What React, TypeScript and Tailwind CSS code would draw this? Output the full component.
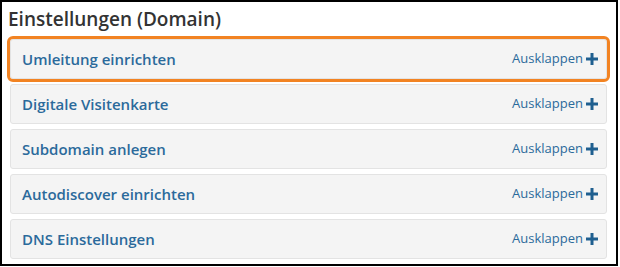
import React from "react";

const items = [
  "Umleitung einrichten",
  "Digitale Visitenkarte",
  "Subdomain anlegen",
  "Autodiscover einrichten",
  "DNS Einstellungen",
];

function Plus() {
  return (
    <svg width="12" height="12" viewBox="0 0 12 12" className="ml-[3px]">
      <rect x="4.5" y="0" width="3" height="12" fill="#1f5f8f" />
      <rect x="0" y="4.5" width="12" height="3" fill="#1f5f8f" />
    </svg>
  );
}

export default function App() {
  return (
    <div className="w-[620px] h-[267px] bg-white" style={{ fontFamily: '"Open Sans", "Noto Sans", sans-serif' }}>
      <div className="w-[618px] h-[266px] border-2 border-black flex flex-col pl-[8px] pr-[9px]">
        <div className="h-[37px] flex items-center -ml-[2px] text-[19px] font-semibold text-[#333333] pb-[2px]">
          Einstellungen (Domain)
        </div>
        <div className="flex flex-col gap-[5px]">
          {items.map((t, i) => (
            <div
              key={t}
              className={
                "h-[40px] flex items-center justify-between bg-[#f4f4f4] border border-[#e3e3e3] rounded-[3px] pl-[11px] pr-[8px] " +
                (i === 0 ? "outline-[3px] outline-solid outline-[#f28322] outline-offset-[0px] rounded-[2px]" : "")
              }
            >
              <span className="text-[15px] font-semibold text-[#2b6a9b]">{t}</span>
              <span className="flex items-center text-[13px] text-[#2b6a9b]">
                Ausklappen
                <Plus />
              </span>
            </div>
          ))}
        </div>
      </div>
    </div>
  );
}
